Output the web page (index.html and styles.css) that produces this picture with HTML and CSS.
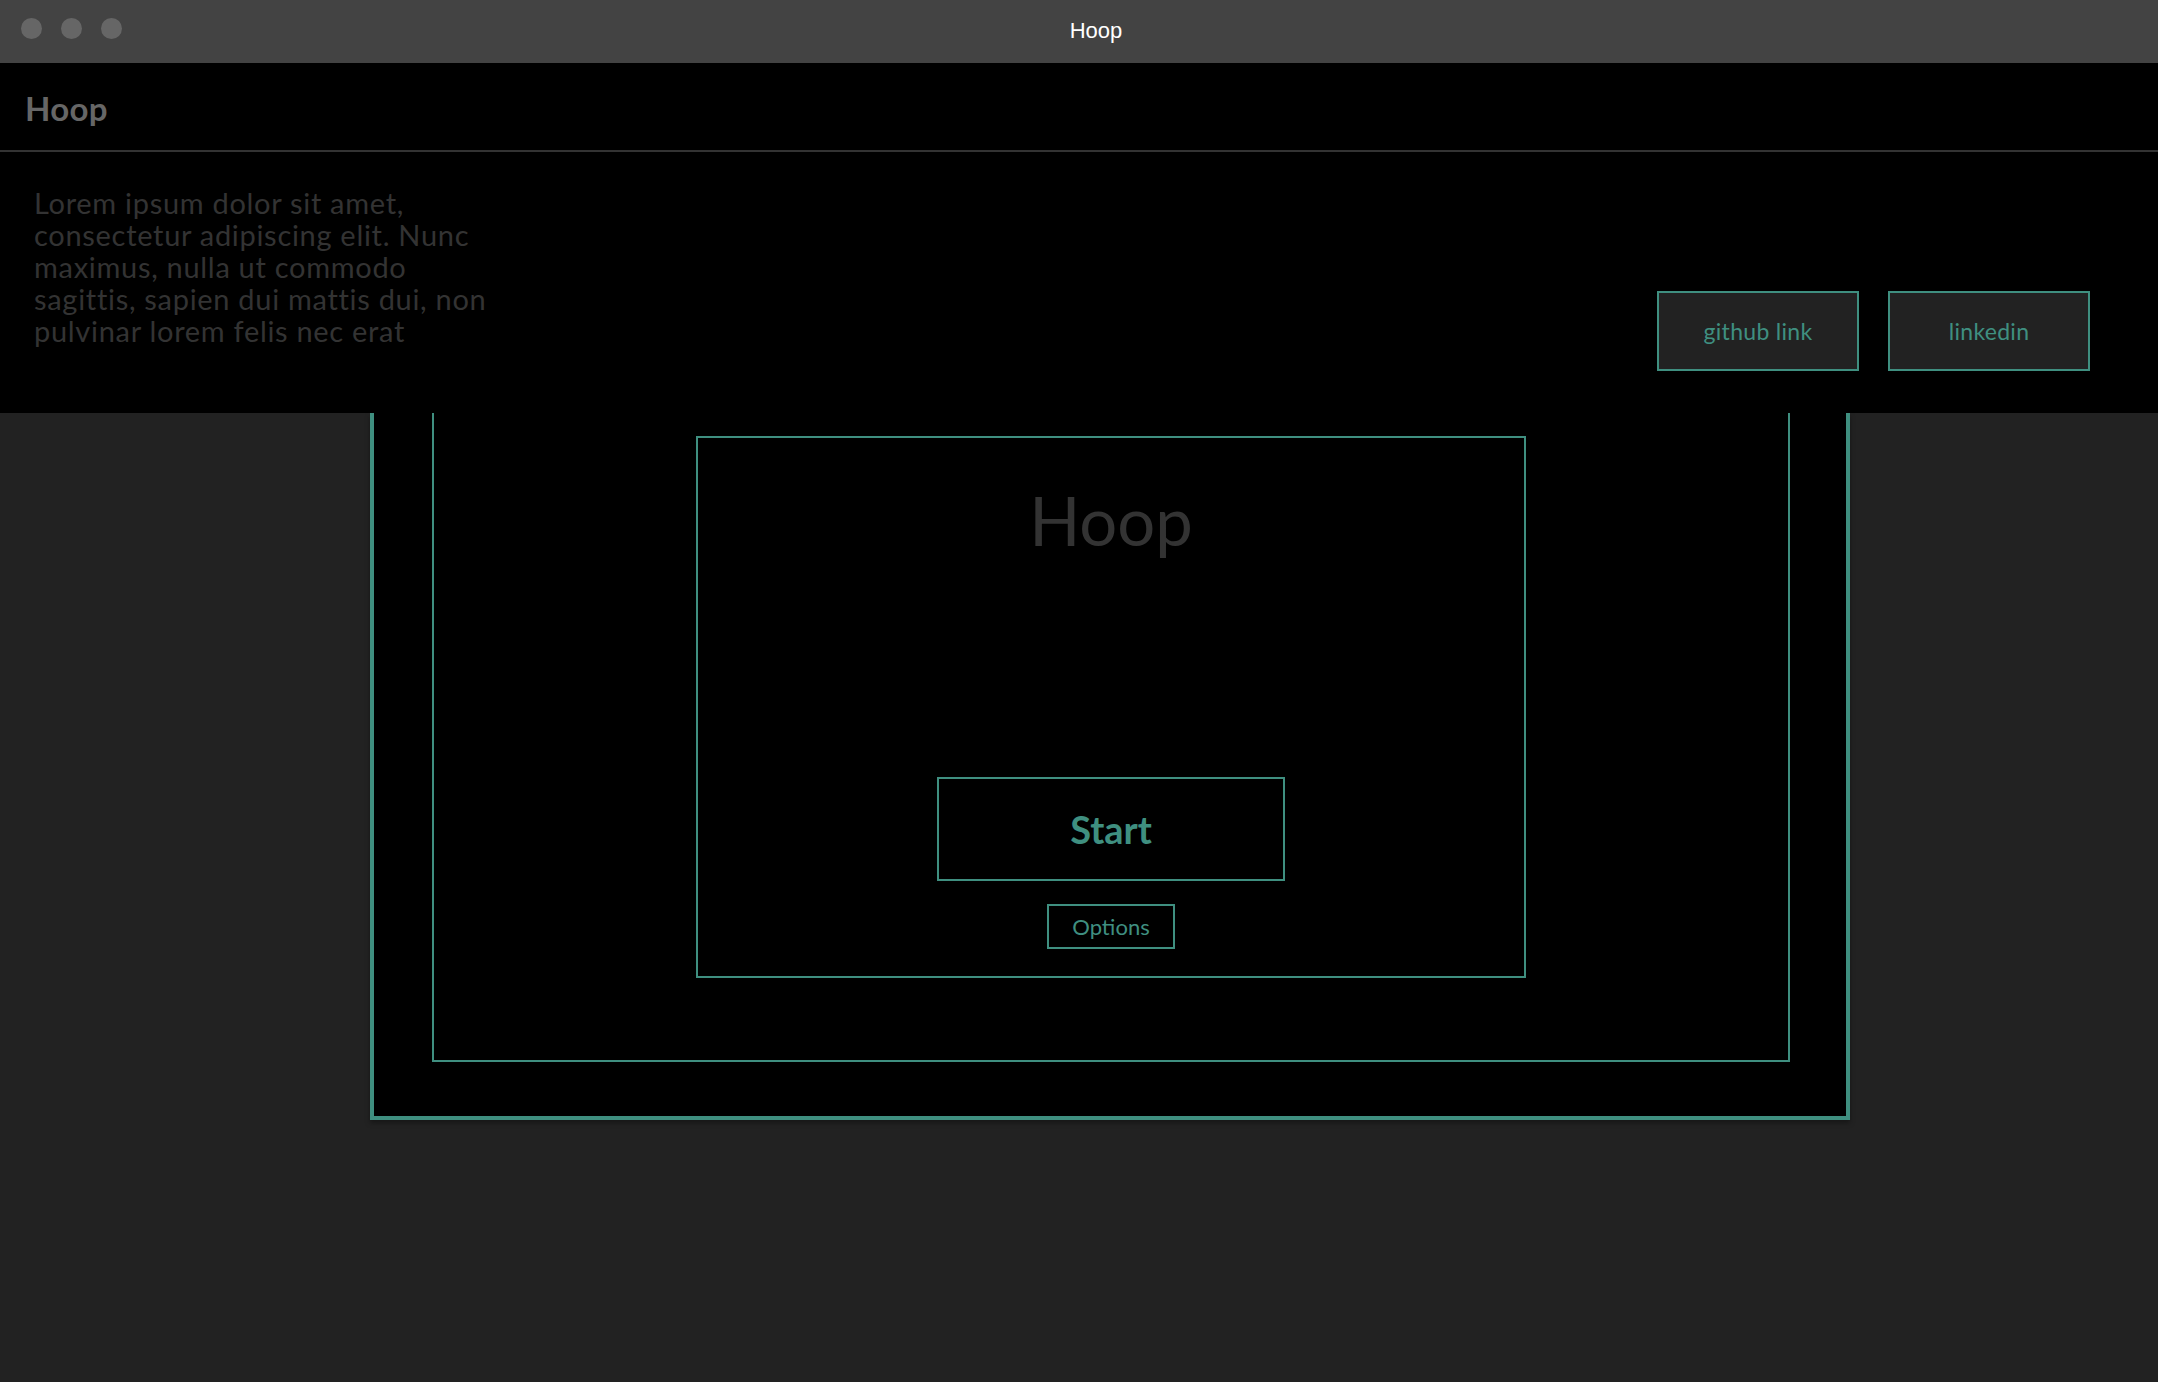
FILE: index.html
```html
<!DOCTYPE html>
<html>
<head>
<meta charset="utf-8">
<title>Hoop</title>
<link rel="stylesheet" href="styles.css">
</head>
<body>
<div class="titlebar">
  <div class="lights"><span class="light"></span><span class="light"></span><span class="light"></span></div>
  <div class="wintitle">Hoop</div>
</div>
<header class="appbar"><h1 class="brand">Hoop</h1></header>
<section class="intro">
  <p class="lorem">Lorem ipsum dolor sit amet, consectetur adipiscing elit. Nunc maximus, nulla ut commodo sagittis, sapien dui mattis dui, non pulvinar lorem felis nec erat</p>
  <div class="links">
    <a class="link-btn">github link</a>
    <a class="link-btn">linkedin</a>
  </div>
</section>
<main class="stage">
  <div class="frame-outer">
    <div class="frame-inner">
      <div class="menu">
        <h2 class="game-title">Hoop</h2>
        <div class="menu-actions">
          <button class="start-btn">Start</button>
          <button class="options-btn">Options</button>
        </div>
      </div>
    </div>
  </div>
</main>
</body>
</html>
```

FILE: styles.css
```css
* { box-sizing: border-box; }
html, body { margin: 0; padding: 0; }
body {
  background: #222222;
  width: 2158px;
  height: 1382px;
  overflow: hidden;
  font-family: "Lato", "Open Sans", sans-serif;
  font-variant-ligatures: none;
}
.titlebar {
  height: 63px;
  background: #434343;
  display: flex;
  align-items: center;
  justify-content: center;
  position: relative;
}
.lights {
  position: absolute;
  left: 21px;
  top: 18px;
  display: flex;
  gap: 19px;
}
.light {
  width: 21px;
  height: 21px;
  border-radius: 50%;
  background: #666666;
}
.wintitle {
  color: #ffffff;
  font-family: "Liberation Sans", "Noto Sans", sans-serif;
  font-size: 22px;
  margin-left: 34px;
  margin-top: -2px;
}
.appbar {
  height: 89px;
  background: #000;
  border-bottom: 2px solid #333333;
  display: flex;
  align-items: center;
  padding-left: 25px;
}
.brand {
  margin: 0;
  font-size: 33px;
  font-weight: 700;
  color: #666666;
  padding-top: 2px;
  letter-spacing: 0.3px;
}
.intro {
  background: #000;
  height: 261px;
  display: flex;
  justify-content: space-between;
  align-items: flex-end;
  padding: 0 68px 42px 34px;
}
.lorem {
  align-self: flex-start;
  margin: 35px 0 0 0;
  width: 478px;
  font-size: 29px;
  line-height: 32px;
  letter-spacing: 0.7px;
  color: #333333;
}
.links {
  display: flex;
  gap: 29px;
}
.link-btn {
  width: 202px;
  height: 80px;
  background: #222222;
  border: 2px solid #3f8f80;
  color: #3f8f80;
  font-size: 23px;
  letter-spacing: 0.3px;
  display: flex;
  align-items: center;
  justify-content: center;
}
.stage {
  padding-left: 370px;
}
.frame-outer {
  width: 1480px;
  background: #000;
  border: 4px solid #3f8f80;
  border-top: none;
  padding: 0 56px 54px 58px;
  box-shadow: 0 3px 5px rgba(0,0,0,0.35);
}
.frame-inner {
  border: 2px solid #3f8f80;
  border-top: none;
  padding: 23px 0 82px 0;
  display: flex;
  justify-content: center;
}
.menu {
  width: 830px;
  height: 542px;
  border: 2px solid #3f8f80;
  display: flex;
  flex-direction: column;
  align-items: center;
}
.game-title {
  margin: 38px 0 0 0;
  font-size: 67px;
  font-weight: 400;
  color: #333333;
  line-height: 88px;
}
.menu-actions {
  margin-top: auto;
  margin-bottom: 27px;
  display: flex;
  flex-direction: column;
  align-items: center;
  gap: 23px;
}
.start-btn {
  width: 348px;
  height: 104px;
  background: #000;
  border: 2px solid #3f8f80;
  color: #3f8f80;
  font-family: "Lato", sans-serif;
  font-size: 38px;
  font-weight: 700;
}
.options-btn {
  width: 128px;
  height: 45px;
  background: #000;
  border: 2px solid #3f8f80;
  color: #3f8f80;
  font-family: "Lato", sans-serif;
  font-size: 22px;
  padding: 0;
}
```
